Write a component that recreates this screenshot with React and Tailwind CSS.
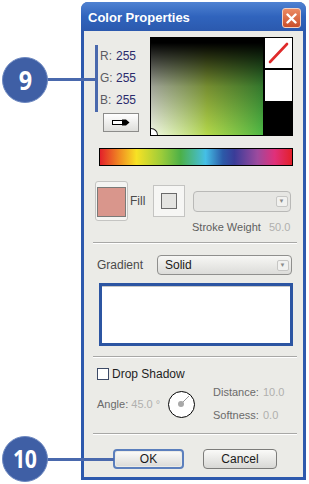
const Dropdown = ({ label, width, height = 21, disabled }) => (
    <div
        className={`flex items-stretch rounded-[4px] border ${
            disabled ? 'border-[#b9b9b7] bg-[#e6e6e3]' : 'border-[#8f8f8d] bg-linear-to-b from-[#f7f7f5] to-[#dcdcd9]'
        }`}
        style={{ width, height }}
    >
        <div className="flex flex-1 items-center pl-[7px] text-[12px] leading-none text-[#1a1a1a]">{label}</div>
        <div className="flex w-[17px] items-center justify-center">
            <div className="h-[11px] w-[12px] rounded-[2px] border border-[#c6c6c4] bg-[#f1f1ef] flex items-center justify-center">
                <span className="text-[6px] leading-none text-[#8a8a8a]">▼</span>
            </div>
        </div>
    </div>
);

const Separator = ({ className = '' }) => (
    <div className={`ml-[9px] mr-[6px] h-[2px] shrink-0 border-t border-[#a8a8a6] border-b border-b-white ${className}`} />
);

const App = () => {
    return (
        <div className="relative h-[484px] w-[309px] overflow-hidden bg-white font-['Liberation_Sans',Arial,sans-serif] text-[11px]">
            {/* window */}
            <div className="ml-[81px] mt-[2px] flex h-[478px] w-[225px] flex-col rounded-t-[7px] bg-[#2d59ad]">
                <div className="flex h-[29px] shrink-0 items-start justify-between rounded-t-[7px] bg-linear-to-b from-[#4f82d2] via-[#3064bd] to-[#2b59ae] pl-[7px] pr-[5px]">
                    <span className="mt-[9px] text-[13px] font-bold leading-none text-white">Color Properties</span>
                    <div className="mt-[6px] flex h-[20px] w-[19px] items-center justify-center rounded-[3px] border border-[#f3d0c0] bg-linear-to-b from-[#ec8a62] to-[#c94e2a]">
                        <svg width="11" height="11" viewBox="0 0 11 11">
                            <path d="M1.5 1.5 L9.5 9.5 M9.5 1.5 L1.5 9.5" stroke="white" strokeWidth="2.4" strokeLinecap="round" />
                        </svg>
                    </div>
                </div>

                <div className="mx-[3px] mb-[3px] flex min-h-0 flex-1 flex-col bg-[#ebebe7]">
                    {/* picker row */}
                    <div className="mt-[6px] flex shrink-0 pl-[11px]">
                        <div className="w-[55px]">
                            <div className="pt-[8px]">
                                {['R', 'G', 'B'].map(c => (
                                    <div key={c} className="flex h-[22px] items-center pl-[5px] text-[12px] leading-none">
                                        <span className="w-[16px] text-[#5c5c62]">{c}:</span>
                                        <span className="text-[#2a2a6c]">255</span>
                                    </div>
                                ))}
                            </div>
                            <div className="ml-[8px] mt-[2px] flex h-[19px] w-[36px] items-center justify-center border border-[#8c8c8a] bg-linear-to-b from-white to-[#dededb]">
                                <svg width="18" height="7" viewBox="0 0 18 7">
                                    <rect x="0.5" y="1.5" width="10" height="4" fill="white" stroke="black" />
                                    <path d="M10 0.5 L14 0.5 L17.5 3.5 L14 6.5 L10 6.5 Z" fill="black" />
                                </svg>
                            </div>
                        </div>
                        <div className="flex h-[99px] w-[143px] border border-black">
                            <div className="relative flex-1 bg-linear-to-r from-[#f3f8e6] via-[#b4d84a] to-[#4cb845]">
                                <div className="h-full w-full bg-linear-to-b from-black from-5% via-[rgba(0,0,0,0.35)] to-transparent" />
                                <div className="absolute bottom-0 left-0 h-[7px] w-[7px] rounded-tr-[7px] border-t border-r border-[#222] bg-white" />
                            </div>
                            <div className="flex w-[29px] flex-col border-l-2 border-black">
                                <div className="h-[32px] border-b-2 border-black bg-white">
                                    <svg width="27" height="30" viewBox="0 0 27 30">
                                        <path d="M5 24 L22 6" stroke="#df2a2a" strokeWidth="2.6" strokeLinecap="round" />
                                    </svg>
                                </div>
                                <div className="h-[31px] bg-white" />
                                <div className="flex-1 bg-black" />
                            </div>
                        </div>
                    </div>

                    {/* rainbow */}
                    <div className="ml-[15px] mt-[12px] h-[18px] w-[194px] shrink-0 border border-black bg-[linear-gradient(to_right,#e3202a,#f08a22_10%,#f7e224_19%,#9ccc3a_32%,#4cb048_42%,#45bfe6_55%,#2c5aa8_64%,#3a3c98_70%,#9c4a9e_82%,#e0307a_91%,#e3202a)]" />

                    {/* fill row */}
                    <div className="mt-[15px] flex h-[40px] shrink-0 items-center pl-[11px]">
                        <div className="h-[40px] w-[33px] rounded-[3px] border border-[#c4c4c2] bg-[#f4f4f2] px-px pt-[5px]">
                            <div className="h-[30px] w-[29px] border border-[#7a7a78] bg-[#d9968c]" />
                        </div>
                        <span className="ml-[2px] w-[23px] text-[12px] leading-none text-[#4a4a4a]">Fill</span>
                        <div className="flex h-[32px] w-[32px] items-center justify-center border border-[#c4c4c2] bg-[#f6f6f4]">
                            <div className="h-[16px] w-[16px] border border-[#6a6a6a] bg-[#e4e4e1]" />
                        </div>
                        <div className="ml-[8px]">
                            <Dropdown label="" width={98} disabled />
                        </div>
                    </div>
                    <div className="flex h-[13px] shrink-0 items-center gap-[8px] pl-[108px] text-[11px] leading-none">
                        <span className="text-[#5e5e5e]">Stroke Weight</span>
                        <span className="text-[#b0b0ae]">50.0</span>
                    </div>

                    <Separator className="mt-[8px]" />

                    {/* gradient */}
                    <div className="mt-[11px] flex h-[20px] shrink-0 items-center pl-[13px]">
                        <span className="w-[60px] text-[12px] leading-none text-[#4a4a4a]">Gradient</span>
                        <Dropdown label="Solid" width={135} height={20} />
                    </div>
                    <div className="ml-[15px] mt-[8px] h-[63px] w-[194px] shrink-0 border-[3px] border-[#2c55a2] bg-white">
                        <div className="h-full w-full border-t border-[#c8c8c8]" />
                    </div>

                    <Separator className="mt-[10px]" />

                    {/* drop shadow */}
                    <div className="mt-[10px] flex h-[12px] shrink-0 items-center pl-[13px]">
                        <div className="h-[12px] w-[12px] border border-[#3d4a66] bg-white" />
                        <span className="ml-[3px] text-[12px] leading-none text-[#1e1e1e]">Drop Shadow</span>
                    </div>
                    <div className="mt-[6px] flex h-[36px] shrink-0 items-center pl-[13px]">
                        <div className="w-[71px] text-[11px] leading-none">
                            <span className="text-[#6a6a6a]">Angle:</span>
                            <span className="text-[#b0b0ae]"> 45.0 °</span>
                        </div>
                        <div className="relative h-[27px] w-[27px] rounded-full border-[1.5px] border-black bg-white">
                            <svg className="absolute inset-0" width="24" height="24" viewBox="0 0 24 24">
                                <path d="M12 12 L20 4" stroke="#9a9a9a" strokeWidth="1" />
                                <circle cx="12" cy="12" r="3" fill="#a8a8a8" />
                            </svg>
                        </div>
                        <div className="ml-[18px] flex flex-col gap-[10px] text-[11px] leading-none">
                            <div className="flex h-[13px] items-center">
                                <span className="w-[50px] text-[#6a6a6a]">Distance:</span>
                                <span className="text-[#b0b0ae]">10.0</span>
                            </div>
                            <div className="flex h-[13px] items-center">
                                <span className="w-[50px] text-[#6a6a6a]">Softness:</span>
                                <span className="text-[#b0b0ae]">0.0</span>
                            </div>
                        </div>
                    </div>

                    <Separator className="mt-[11px]" />

                    {/* buttons */}
                    <div className="mt-[14px] flex shrink-0 gap-[19px] pl-[29px]">
                        <div className="h-[20px] w-[71px] rounded-[4px] border-2 border-[#5b7fbd] p-px">
                            <div className="flex h-full items-center justify-center rounded-[2px] bg-linear-to-b from-[#fafaf8] to-[#dcdcd9] text-[12px] leading-none text-[#1a1a1a]">
                                OK
                            </div>
                        </div>
                        <div className="flex h-[20px] w-[74px] items-center justify-center rounded-[4px] border border-[#7c7c7a] bg-linear-to-b from-[#fafaf8] to-[#d8d8d5] text-[12px] leading-none text-[#1a1a1a]">
                            Cancel
                        </div>
                    </div>
                </div>
            </div>

            {/* callouts */}
            <div className="absolute left-[95px] top-[45px] h-[67px] w-[3px] bg-[#4a69ad]" />
            <div className="absolute left-[46px] top-[78px] h-[3px] w-[50px] bg-[#4a69ad]" />
            <div className="absolute left-[2px] top-[57px] flex h-[46px] w-[46px] items-center justify-center rounded-full border border-[#6d88c0] bg-[#3f5fa5]">
                <span className="inline-block scale-x-90 font-['Open_Sans',sans-serif] text-[26px] font-bold text-white">9</span>
            </div>
            <div className="absolute left-[46px] top-[458px] h-[3px] w-[68px] bg-[#4a69ad]" />
            <div className="absolute left-[2px] top-[436px] flex h-[46px] w-[46px] items-center justify-center rounded-full border border-[#6d88c0] bg-[#3f5fa5]">
                <span className="inline-block scale-x-85 font-['Open_Sans',sans-serif] text-[25px] font-bold tracking-tight text-white">10</span>
            </div>
        </div>
    );
};

export default App;
